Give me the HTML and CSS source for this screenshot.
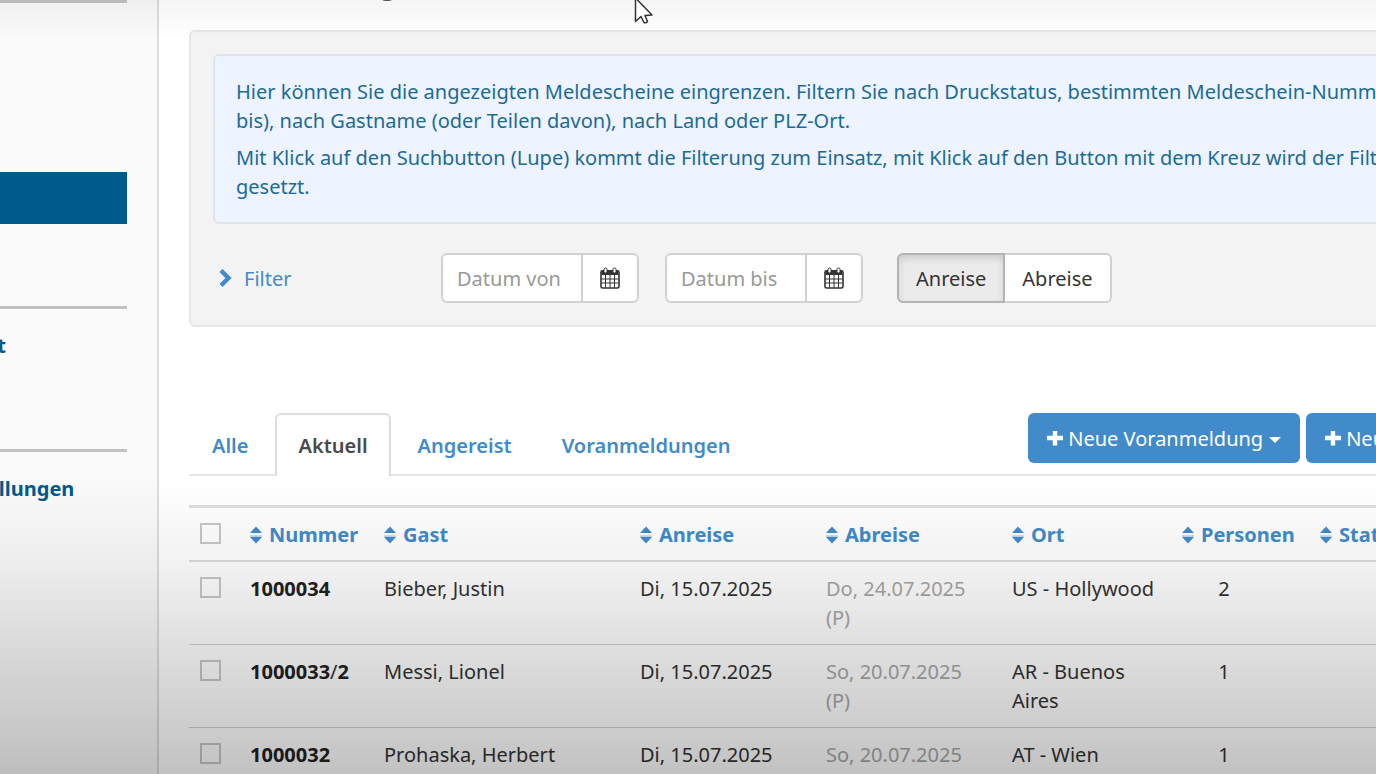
FILE: index.html
```html
<!DOCTYPE html>
<html lang="de">
<head>
    <meta charset="UTF-8">
    <meta name="viewport" content="width=device-width, initial-scale=1.0">
    <title>Meldescheine</title>
    <link rel="stylesheet" href="styles.css">
</head>
<body>
    <!-- shared icons -->
    <svg class="sprite" aria-hidden="true">
        <symbol id="sort" viewBox="0 0 12 18">
            <path d="M6 0.5 L12 7 H0 Z"/>
            <path d="M0 9.2 H12 V11 H0 Z" opacity=".35"/>
            <path d="M0 11 H12 L6 17.5 Z"/>
        </symbol>
        <symbol id="calendar" viewBox="0 0 20 22">
            <path d="M1.5 3.5 H18.5 V8 H1.5 Z"/>
            <rect x="1" y="3.7" width="18" height="17.3" rx="1.6" fill="none" stroke="currentColor" stroke-width="1.6"/>
            <path d="M5.5 8 V20.5 M10 8 V20.5 M14.5 8 V20.5 M1.5 12 H18.5 M1.5 16 H18.5" fill="none" stroke="currentColor" stroke-width="1"/>
            <rect x="4" y="1" width="3" height="5" rx="1.4" fill="#fff" stroke="currentColor" stroke-width="1"/>
            <rect x="13" y="1" width="3" height="5" rx="1.4" fill="#fff" stroke="currentColor" stroke-width="1"/>
        </symbol>
        <symbol id="plus" viewBox="0 0 16 16">
            <path d="M5.8 1 H10.2 V5.8 H16 V10.2 H10.2 V15.5 H5.8 V10.2 H0 V5.8 H5.8 Z"/>
        </symbol>
    </svg>

    <aside class="sidebar">
        <section class="nav-group nav-group-first">
            <a class="nav-active" href="#" aria-label="Aktiv"></a>
        </section>
        <section class="nav-group">
            <h3>Report</h3>
        </section>
        <section class="nav-group">
            <h3>Einstellungen</h3>
        </section>
    </aside>

    <main class="content">
        <h1>Gästeverwaltung</h1>

        <div class="panel">
            <div class="info">
                <p>Hier können Sie die angezeigten Meldescheine eingrenzen. Filtern Sie nach Druckstatus, bestimmten Meldeschein-Nummern (von<br>bis), nach Gastname (oder Teilen davon), nach Land oder PLZ-Ort.</p>
                <p>Mit Klick auf den Suchbutton (Lupe) kommt die Filterung zum Einsatz, mit Klick auf den Button mit dem Kreuz wird der Filter<br>gesetzt.</p>
            </div>
            <form class="filter-row">
                <a class="filter-toggle" href="#">
                    <svg width="13" height="20" viewBox="0 0 13 20" aria-hidden="true"><path d="M2 2.5 L9.5 10 L2 17.5" fill="none" stroke="currentColor" stroke-width="4.4"/></svg>
                    Filter
                </a>
                <div class="date-group">
                    <input type="text" placeholder="Datum von" aria-label="Datum von">
                    <button type="button" aria-label="Kalender von"><svg width="20" height="22"><use href="#calendar"/></svg></button>
                </div>
                <div class="date-group">
                    <input type="text" placeholder="Datum bis" aria-label="Datum bis">
                    <button type="button" aria-label="Kalender bis"><svg width="20" height="22"><use href="#calendar"/></svg></button>
                </div>
                <div class="toggle">
                    <button type="button" class="on">Anreise</button>
                    <button type="button">Abreise</button>
                </div>
            </form>
        </div>

        <div class="tab-bar">
            <nav class="tabs">
                <a href="#">Alle</a>
                <a href="#" class="active">Aktuell</a>
                <a href="#">Angereist</a>
                <a href="#">Voranmeldungen</a>
            </nav>
            <div class="actions">
                <button type="button"><svg width="16" height="16"><use href="#plus"/></svg>Neue Voranmeldung<span class="caret"></span></button>
                <button type="button"><svg width="16" height="16"><use href="#plus"/></svg>Neuer Meldeschein<span class="caret"></span></button>
            </div>
        </div>

        <table class="list">
            <colgroup>
                <col class="c-check">
                <col class="c-number">
                <col class="c-guest">
                <col class="c-date">
                <col class="c-date">
                <col class="c-place">
                <col class="c-count">
                <col>
            </colgroup>
            <thead>
                <tr>
                    <th><input type="checkbox" aria-label="Alle auswählen"></th>
                    <th><a href="#"><svg width="12" height="18"><use href="#sort"/></svg>Nummer</a></th>
                    <th><a href="#"><svg width="12" height="18"><use href="#sort"/></svg>Gast</a></th>
                    <th><a href="#"><svg width="12" height="18"><use href="#sort"/></svg>Anreise</a></th>
                    <th><a href="#"><svg width="12" height="18"><use href="#sort"/></svg>Abreise</a></th>
                    <th><a href="#"><svg width="12" height="18"><use href="#sort"/></svg>Ort</a></th>
                    <th><a href="#"><svg width="12" height="18"><use href="#sort"/></svg>Personen</a></th>
                    <th><a href="#"><svg width="12" height="18"><use href="#sort"/></svg>Status</a></th>
                </tr>
            </thead>
            <tbody>
                <tr>
                    <td><input type="checkbox" aria-label="1000034"></td>
                    <td><b>1000034</b></td>
                    <td>Bieber, Justin</td>
                    <td>Di, 15.07.2025</td>
                    <td class="muted">Do, 24.07.2025 (P)</td>
                    <td>US - Hollywood</td>
                    <td class="count">2</td>
                    <td></td>
                </tr>
                <tr>
                    <td><input type="checkbox" aria-label="1000033/2"></td>
                    <td><b>1000033</b>/<b>2</b></td>
                    <td>Messi, Lionel</td>
                    <td>Di, 15.07.2025</td>
                    <td class="muted">So, 20.07.2025 (P)</td>
                    <td>AR - Buenos Aires</td>
                    <td class="count">1</td>
                    <td></td>
                </tr>
                <tr>
                    <td><input type="checkbox" aria-label="1000032"></td>
                    <td><b>1000032</b></td>
                    <td>Prohaska, Herbert</td>
                    <td>Di, 15.07.2025</td>
                    <td class="muted">So, 20.07.2025 (P)</td>
                    <td>AT - Wien</td>
                    <td class="count">1</td>
                    <td></td>
                </tr>
            </tbody>
        </table>
    </main>

    <svg class="pointer" width="20" height="28" viewBox="0 0 20 28" aria-hidden="true">
        <path d="M1.5 1 V24.5 L7 19.5 L10 25.5 Q12 26.5 13.5 24.5 L11 18.5 L18 18 Z" fill="#fff" stroke="#333" stroke-width="1.5" stroke-linejoin="round"/>
    </svg>
</body>
</html>
```
FILE: styles.css
```css
* {
    box-sizing: border-box;
}

body {
    display: flex;
    height: 100vh;
    margin: 0;
    overflow: hidden;
    background: #fff;
    color: #333;
    font-family: "Noto Sans", "Open Sans", sans-serif;
    font-size: 20px;
    line-height: 29px;
}

/* soft shade at the top and bottom of the window */
body::before,
body::after {
    content: "";
    position: fixed;
    left: 0;
    right: 0;
    z-index: 5;
    pointer-events: none;
}

body::before {
    top: 0;
    height: 40px;
    background: linear-gradient(rgba(0, 0, 0, .04), rgba(0, 0, 0, 0));
}

body::after {
    bottom: 0;
    height: 38vh;
    background: linear-gradient(rgba(0, 0, 0, 0), rgba(0, 0, 0, .05) 28%, rgba(0, 0, 0, .24));
}

a {
    color: #428bca;
    text-decoration: none;
}

button,
input {
    margin: 0;
    font: inherit;
    color: inherit;
}

svg {
    fill: currentColor;
    flex: none;
}

.sprite {
    position: absolute;
    width: 0;
    height: 0;
}

/* sidebar */
.sidebar {
    flex: none;
    width: 249px;
    margin-left: -90px;
    padding-right: 30px;
    background: #fafafa;
    border-right: 2px solid #ddd;
}

.nav-group {
    height: 143px;
    padding: 22px 0 0 28px;
    border-top: 3px solid #c2c2c2;
}

.nav-group-first {
    height: 306px;
    padding: 169px 0 0;
}

.nav-active {
    display: block;
    height: 52px;
    background: #005a8c;
}

.nav-group h3 {
    margin: 0;
    color: #005a8c;
    font-size: 20px;
}

/* content */
.content {
    flex: none;
    width: 102.2%;
    padding-left: 30px;
}

h1 {
    margin: -29px 0 30px;
    color: #555;
    font-size: 26px;
    font-weight: 400;
    line-height: 29px;
}

.panel {
    padding: 22px;
    background: #f3f3f3;
    border: 2px solid #e6e6e6;
    border-radius: 6px;
}

.info {
    padding: 21px;
    background: #edf4ff;
    border: 2px solid #e0e3ea;
    border-radius: 6px;
    color: #1d6a96;
    white-space: nowrap;
}

.info p {
    margin: 0 0 8px;
}

.info p:last-child {
    margin: 0;
}

.filter-row {
    display: flex;
    align-items: center;
    margin-top: 29px;
}

.filter-toggle {
    display: flex;
    align-items: center;
    gap: 12px;
    width: 228px;
    padding-left: 6px;
}

.date-group {
    display: flex;
    height: 50px;
    margin-right: 26px;
    background: #fff;
    border: 2px solid #d2d2d2;
    border-radius: 6px;
}

.date-group input {
    width: 140px;
    padding: 0 14px;
    background: none;
    border: 0;
    border-right: 2px solid #d2d2d2;
}

.date-group input::placeholder {
    color: #999;
}

.date-group button {
    display: flex;
    align-items: center;
    padding: 0 17px;
    background: none;
    border: 0;
}

.toggle {
    display: flex;
    height: 50px;
    margin-left: 8px;
}

.toggle button {
    padding: 0 17px;
    background: #fff;
    border: 2px solid #d0d0d0;
    border-left: 0;
    border-radius: 0 6px 6px 0;
}

.toggle .on {
    background: #ebebeb;
    border: 2px solid #b4b4b4;
    border-radius: 6px 0 0 6px;
    box-shadow: inset 0 4px 7px rgba(0, 0, 0, .12);
}

/* tabs */
.tab-bar {
    display: flex;
    justify-content: space-between;
    align-items: flex-start;
    margin: 86px 0 29px;
    border-bottom: 2px solid #e6e6e6;
}

.tabs {
    display: flex;
    gap: 4px;
    margin-bottom: -2px;
    font-weight: 600;
}

.tabs a {
    padding: 15px 21px;
    border: 2px solid transparent;
    border-bottom: 0;
    border-radius: 6px 6px 0 0;
    line-height: 31px;
}

.tabs .active {
    background: #fff;
    border-color: #ddd;
    color: #4a4a4a;
}

.actions {
    display: flex;
    gap: 6px;
}

.actions button {
    display: flex;
    align-items: center;
    height: 50px;
    padding: 0 19px;
    background: #428bca;
    border: 0;
    border-radius: 6px;
    color: #fff;
}

.actions svg {
    margin-right: 5px;
}

.caret {
    margin: 3px 0 0 6px;
    border: 6px solid transparent;
    border-top-color: #fff;
    border-bottom: 0;
}

/* table */
.list {
    width: 100%;
    border-collapse: separate;
    border-spacing: 0;
    border-top: 3px solid #ddd;
    table-layout: fixed;
}

.c-check {
    width: 49px;
}

.c-number {
    width: 134px;
}

.c-guest {
    width: 256px;
}

.c-date {
    width: 186px;
}

.c-place {
    width: 170px;
}

.c-count {
    width: 138px;
}

.list th,
.list td {
    padding: 12px;
    border-bottom: 1px solid #d2d2d2;
    text-align: left;
    vertical-align: top;
}

.list th {
    padding: 12px 0 11px 12px;
    border-bottom: 2px solid #ddd;
}

.list th a {
    display: flex;
    align-items: center;
    gap: 7px;
}

.list td.count {
    padding-right: 42px;
    text-align: center;
}

.list b {
    color: #222;
}

.list td.muted {
    color: #a8a8a8;
}

.list input {
    display: block;
    width: 21px;
    height: 21px;
    margin: 3px 0 0 -1px;
    appearance: none;
    border: 2px solid #c8c8c8;
}

.pointer {
    position: absolute;
    top: -3px;
    left: 634px;
    z-index: 6;
}
```
